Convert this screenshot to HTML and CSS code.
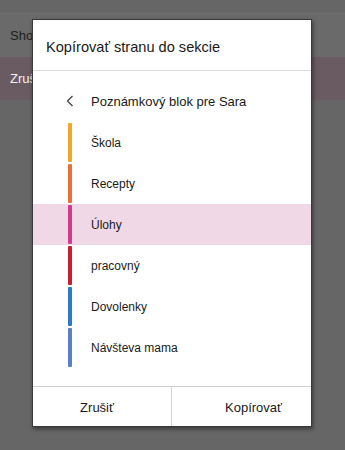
FILE: index.html
```
<html>
<head>
<title>Kopírovať stranu</title>
<link rel="stylesheet" href="styles.css">
</head>
<body>

    <div class="page">
        <div class="topbar"></div>
        <div class="row">Shop</div>
        <div class="row selected">Zruš</div>
    </div>

    <div class="dialog">
        <div class="title">Kopírovať stranu do sekcie</div>
        <div class="nav">
            <svg class="back" width="8" height="12" viewBox="0 0 8 12">
                <path d="M6.5 1 L1.5 6 L6.5 11" fill="none" stroke="#444" stroke-width="1.3"/>
            </svg>
            <span>Poznámkový blok pre Sara</span>
        </div>
        <div class="sections">
            <div class="section"><i class="bar" style="background:#f5a52a"></i>Škola</div>
            <div class="section"><i class="bar" style="background:#ea7036"></i>Recepty</div>
            <div class="section active"><i class="bar" style="background:#d23a8e"></i>Úlohy</div>
            <div class="section"><i class="bar" style="background:#c81f30"></i>pracovný</div>
            <div class="section"><i class="bar" style="background:#2a7ac9"></i>Dovolenky</div>
            <div class="section"><i class="bar" style="background:#5b7fca"></i>Návšteva mama</div>
        </div>
        <div class="buttons">
            <div class="btn cancel">Zrušiť</div>
            <div class="btn ok">Kopírovať</div>
        </div>
    </div>

</body>
</html>
```
FILE: styles.css
```
body {
    margin: 0;
    background: #666666;
    font-family: "Segoe UI", "Liberation Sans", Arial, sans-serif;
    width: 345px;
    height: 450px;
    overflow: hidden;
}

/* dimmed page behind the dialog */
.topbar {
    height: 13px;
    border-bottom: 1px solid #707070;
}

.row {
    height: 43px;
    line-height: 43px;
    padding-left: 10px;
    font-size: 13px;
    color: #1e1e1e;
    background: #6a6a6a;
}

.row.selected {
    background: #6a5a61;
    color: #f2f2f2;
}

/* the dialog */
.dialog {
    position: absolute;
    left: 32px;
    top: 19px;
    width: 278px;
    height: 406px;
    background: #fff;
    border: 1px solid #3a3a3a;
    box-shadow: 1px 2px 4px rgba(0, 0, 0, 0.45);
    display: flex;
    flex-direction: column;
}

.title {
    height: 50px;
    line-height: 54px;
    padding-left: 13px;
    font-size: 14.6px;
    color: #1a1a1a;
    border-bottom: 1px solid #dcdcdc;
}

.nav {
    height: 51px;
    display: flex;
    align-items: center;
    padding: 9px 0 0 33px;
    box-sizing: border-box;
    font-size: 13px;
    color: #1a1a1a;
}

.back {
    margin-right: 17px;
}

.section {
    height: 41px;
    display: flex;
    align-items: center;
    padding-top: 1px;
    box-sizing: border-box;
    font-size: 12px;
    color: #1a1a1a;
}

.section.active {
    background: #f1d8e6;
}

.bar {
    width: 4px;
    align-self: stretch;
    margin: 0 19px 1px 35px;
    border-radius: 1px;
}

.buttons {
    margin-top: auto;
    height: 39px;
    display: flex;
    border-top: 1px solid #cfcfcf;
}

.btn {
    width: 50%;
    box-sizing: border-box;
    line-height: 41px;
    font-size: 13px;
    color: #1a1a1a;
    text-align: center;
}

.btn.cancel {
    padding-right: 10px;
    border-right: 1px solid #d4d4d4;
}

.btn.ok {
    padding-left: 24px;
}
```
